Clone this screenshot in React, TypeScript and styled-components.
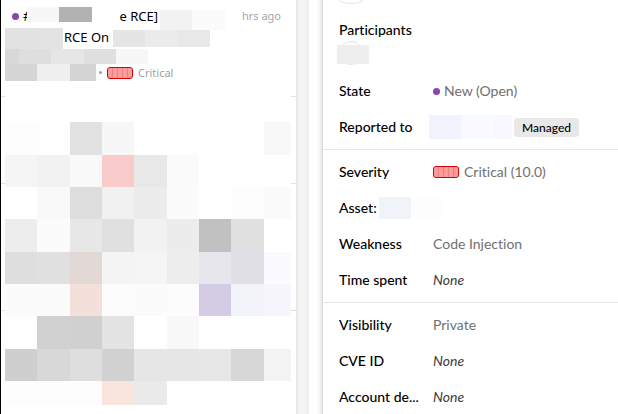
import React from "react";
import styled, { createGlobalStyle, css } from "styled-components";

const GlobalStyle = createGlobalStyle`
  *, *::before, *::after { box-sizing: border-box; }
  body { margin: 0; background: #fff; overflow: hidden; }
`;

const Page = styled.main`
  display: grid;
  grid-template-columns: minmax(0, 296fr) 27px minmax(0, 295fr);
  height: 100vh;
  overflow: hidden;
  background: #fff;
`;

/* ---------- report list ---------- */

const ReportList = styled.section`
  position: relative;
  border-left: 1px solid #000;
  font-family: "Noto Sans", sans-serif;
  overflow: hidden;
`;

const Report = styled.article<{ $height: number }>`
  height: ${(p) => p.$height}px;
  border-bottom: 1px solid #e2e2e2;
`;

const ReportSummary = styled(Report)`
  padding: 7px 0 0 4px;
`;

const Line = styled.div<{ $height: number; $align?: string }>`
  display: flex;
  align-items: ${(p) => p.$align ?? "flex-start"};
  height: ${(p) => p.$height}px;
`;

const Swatch = styled.span<{ $w: number; $h: number; $color: string }>`
  flex: none;
  width: ${(p) => p.$w}px;
  height: ${(p) => p.$h}px;
  background: ${(p) => p.$color};
`;

const Dot = styled.span`
  flex: none;
  width: 7px;
  height: 7px;
  border-radius: 50%;
  background: #8e44ad;
`;

const ListDot = styled(Dot)`
  margin: 6px 4px 0 7px;
`;

const Title = styled.span<{ $width: number; $end?: boolean }>`
  display: flex;
  flex: none;
  justify-content: ${(p) => (p.$end ? "flex-end" : "flex-start")};
  width: ${(p) => p.$width}px;
  color: #000;
  font-size: 13px;
  line-height: 18px;
  white-space: nowrap;
`;

const Age = styled.time`
  margin: 0 15px 0 auto;
  color: #a6a6a6;
  font-size: 11px;
  line-height: 18px;
  white-space: nowrap;
`;

const Bullet = styled.span`
  flex: none;
  width: 3px;
  height: 3px;
  margin: 0 5px 0 3px;
  border-radius: 50%;
  background: #a0a0a0;
`;

const Rating = styled.span`
  margin-left: 5px;
  color: #a0a0a0;
  font-size: 11px;
  line-height: 16px;
`;

const Meter = styled.span`
  flex: none;
  display: flex;
  justify-content: space-evenly;
  width: 26px;
  height: 12px;
  border: 1px solid #d00;
  border-radius: 3px;
  background: #ff9a9a;
`;

const MeterTick = styled.span`
  width: 1px;
  height: 100%;
  background: #df8585;
`;

const Mosaic = styled.div`
  position: absolute;
  top: 90px;
  left: 4px;
  right: 5px;
  padding-top: 32px;
  display: grid;
  grid-template-columns: 32fr 33fr 32fr 32fr 33fr 32fr 32fr 33fr 27fr;
  grid-template-rows: 33px 32px 32px 33px 32px 32px 33px 32px 24px;
  background: #fff;
`;

const Tile = styled.span<{ $color: string }>`
  background: ${(p) => p.$color};
`;

/* ---------- gutter ---------- */

const Gutter = styled.div`
  display: grid;
  grid-template-columns: 13px 14px;
`;

const ScrollTrack = styled.div`
  background: linear-gradient(90deg, #dfdfdf, #f0f0f0 2px, #f4f4f4 4px, #f4f4f4 9px, #ececec);
`;

const PanelShadow = styled.div`
  background: linear-gradient(90deg, #fff 7px, #f5f5f5 11px, #d8d8d8);
`;

/* ---------- details ---------- */

const Details = styled.aside`
  font-family: Lato, sans-serif;
  font-size: 14px;
  font-variant-ligatures: none;
  line-height: 20px;
  color: #000;
  overflow: hidden;
`;

const avatar = css`
  width: 24px;
  border: 1px solid #e4e4e4;
`;

const ClippedAvatar = styled.div`
  ${avatar}
  height: 4px;
  margin-left: 16px;
  border-top: 0;
  border-radius: 0 0 12px 12px / 0 0 4px 4px;
`;

const Participants = styled.section`
  padding: 16px 16px 0;
`;

const Heading = styled.h2`
  margin: 0;
  font-size: 14px;
  font-weight: 500;
  line-height: 20px;
`;

const Avatar = styled.div`
  ${avatar}
  position: relative;
  height: 24px;
  margin-top: 1px;
  border-radius: 50%;
`;

const AvatarCover = styled.span`
  position: absolute;
  top: 3px;
  left: -3px;
  width: 32px;
  height: 19px;
  background: #eee;
`;

const Fields = styled.dl<{ $first?: boolean }>`
  margin: 0;
  padding: ${(p) => (p.$first ? "8px" : "4px")} 0 4px 16px;
  & + & {
    border-top: 1px solid #e6e6e6;
  }
`;

const Field = styled.div<{ $tight?: boolean }>`
  display: grid;
  grid-template-columns: ${(p) => (p.$tight ? "40px" : "94px")} minmax(0, 1fr);
  align-items: center;
  height: 36px;
`;

const Label = styled.dt`
  padding-right: 12px;
  overflow: hidden;
  text-overflow: ellipsis;
  white-space: nowrap;
  font-weight: 500;
`;

const WideLabel = styled(Label)`
  padding-right: 8px;
`;

const TightLabel = styled(Label)`
  padding-right: 0;
`;

const Value = styled.dd<{ $gap?: number }>`
  display: flex;
  align-items: center;
  gap: ${(p) => p.$gap ?? 0}px;
  margin: 0;
  color: #707070;
  white-space: nowrap;
`;

const Empty = styled.em`
  color: #3c3c3c;
`;

const Shaded = styled(Value)`
  margin-left: -4px;
`;

const Tag = styled.span`
  margin-left: 2px;
  padding: 0 8px;
  border-radius: 4px;
  background: #e8e8e8;
  color: #000;
  font-size: 12px;
  font-weight: 500;
  line-height: 19px;
`;

const tiles = [
  ["#fdfdfd", "#fefefe", "#e2e2e2", "#f7f7f7", "#fff", "#fefefe", "#fff", "#fff", "#f8f8f8"],
  ["#f5f5f5", "#f2f2f2", "#f9f9f9", "#facbcb", "#e8e8e8", "#fafafa", "#fff", "#fff", "#fff"],
  ["#fff", "#f9f9f9", "#dddddd", "#f1f1f1", "#ececec", "#fbfbfb", "#fff", "#fdfdfd", "#fbfbfb"],
  ["#ededed", "#fbfbfb", "#e7e7e7", "#e0e0e0", "#f2f2f2", "#ececec", "#c1c1c1", "#e1e1e1", "#fff"],
  ["#dedede", "#e0e0e0", "#e2d9d7", "#f4f4f4", "#f5f5f5", "#ededed", "#e6e6ec", "#e1e0e6", "#fbfbff"],
  ["#fbfbfb", "#fbfbfb", "#f4e0da", "#fcfcfc", "#fbfbfb", "#fcfcfc", "#d4cbe4", "#f3f3fa", "#f7f6fd"],
  ["#fefefe", "#d1d1d1", "#d0d0d0", "#e3e3e3", "#fff", "#f8f8f8", "#fff", "#fff", "#fff"],
  ["#cfcfcf", "#d8d8d8", "#dedede", "#d1d1d1", "#e6e6e6", "#e6e6e6", "#e7e7e7", "#d7d7d7", "#f4f4f4"],
  ["#fdfdfd", "#fdfdfd", "#fdfdfd", "#fae4de", "#eaeaea", "#fff", "#fff", "#fff", "#fff"],
];

function SeverityMeter() {
  return (
    <Meter aria-hidden="true">
      {[0, 1, 2, 3].map((i) => (
        <MeterTick key={i} />
      ))}
    </Meter>
  );
}

export default function App() {
  return (
    <>
      <GlobalStyle />
      <Page>
        <ReportList>
          <ReportSummary $height={97}>
            <Line $height={21}>
              <ListDot />
              <Title $width={4}>#</Title>
              <Swatch $w={32} $h={15} $color="#f7f7f7" />
              <Swatch $w={33} $h={15} $color="#b2b2b2" />
              <Title $width={66} $end>e RCE]</Title>
              <Swatch $w={2} $h={21} $color="#fff" />
              <Line $height={23} $align="flex-end">
                <Swatch $w={32} $h={20} $color="#f2f2f2" />
                <Swatch $w={33} $h={20} $color="#fbfbfb" />
              </Line>
              <Age>hrs ago</Age>
            </Line>
            <Line $height={21}>
              <Swatch $w={32} $h={21} $color="#e2e2e2" />
              <Swatch $w={26} $h={21} $color="#e3e3e3" />
              <Swatch $w={1} $h={21} $color="#fff" />
              <Title $width={49}>RCE On</Title>
              <Line $height={19} $align="flex-end">
                <Swatch $w={32} $h={17} $color="#e5e5e5" />
                <Swatch $w={33} $h={17} $color="#ebebeb" />
                <Swatch $w={32} $h={17} $color="#e8e8e8" />
              </Line>
            </Line>
            <Line $height={15}>
              <Swatch $w={14} $h={15} $color="#d8d8d8" />
              <Swatch $w={32} $h={15} $color="#dedede" />
              <Swatch $w={33} $h={15} $color="#e6e6e6" />
              <Swatch $w={32} $h={15} $color="#dfdfdf" />
              <Swatch $w={32} $h={15} $color="#f7f7f7" />
            </Line>
            <Line $height={17} $align="center">
              <Swatch $w={32} $h={17} $color="#d6d6d6" />
              <Swatch $w={33} $h={17} $color="#efefef" />
              <Swatch $w={26} $h={17} $color="#d4d4d4" />
              <Bullet />
              <SeverityMeter />
              <Rating>Critical</Rating>
            </Line>
          </ReportSummary>
          <Report $height={87} />
          <Report $height={127} />
          <Mosaic>
            {tiles.flatMap((row, y) =>
              row.map((color, x) => <Tile key={`${y}-${x}`} $color={color} />)
            )}
          </Mosaic>
        </ReportList>

        <Gutter>
          <ScrollTrack />
          <PanelShadow />
        </Gutter>

        <Details>
          <ClippedAvatar />
          <Participants>
            <Heading>Participants</Heading>
            <Avatar>
              <AvatarCover />
            </Avatar>
          </Participants>
          <Fields $first>
            <Field>
              <Label>State</Label>
              <Value $gap={4}>
                <Dot />
                New (Open)
              </Value>
            </Field>
            <Field>
              <Label>Reported to</Label>
              <Shaded>
                <Swatch $w={32} $h={24} $color="#f1f4fe" />
                <Swatch $w={33} $h={24} $color="#f8fbff" />
                <Swatch $w={18} $h={24} $color="#f9f8fe" />
                <Tag>Managed</Tag>
              </Shaded>
            </Field>
          </Fields>
          <Fields>
            <Field>
              <Label>Severity</Label>
              <Value $gap={5}>
                <SeverityMeter />
                Critical (10.0)
              </Value>
            </Field>
            <Field $tight>
              <TightLabel>Asset:</TightLabel>
              <Value>
                <Swatch $w={32} $h={22} $color="#f0f4f9" />
                <Swatch $w={33} $h={22} $color="#fdfdfd" />
              </Value>
            </Field>
            <Field>
              <Label>Weakness</Label>
              <Value>Code Injection</Value>
            </Field>
            <Field>
              <Label>Time spent</Label>
              <Value>
                <Empty>None</Empty>
              </Value>
            </Field>
          </Fields>
          <Fields>
            <Field>
              <Label>Visibility</Label>
              <Value>Private</Value>
            </Field>
            <Field>
              <Label>CVE ID</Label>
              <Value>
                <Empty>None</Empty>
              </Value>
            </Field>
            <Field>
              <WideLabel>Account de...</WideLabel>
              <Value>
                <Empty>None</Empty>
              </Value>
            </Field>
          </Fields>
        </Details>
      </Page>
    </>
  );
}
